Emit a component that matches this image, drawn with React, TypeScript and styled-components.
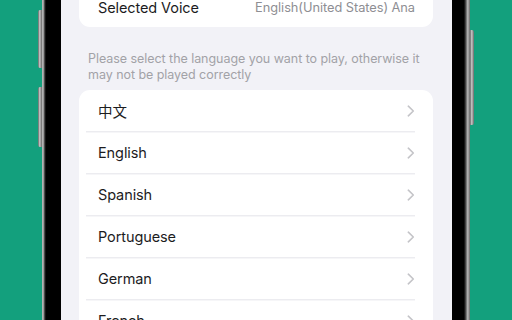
import React from "react";
import styled, { createGlobalStyle } from "styled-components";

const Global = createGlobalStyle`
  html, body { margin: 0; padding: 0; }
  body {
    width: 512px;
    height: 320px;
    overflow: hidden;
    background: #13a07d;
    font-family: Inter, "Noto Sans", "Noto Sans CJK SC", sans-serif;
    -webkit-font-smoothing: antialiased;
  }
`;

const Stage = styled.div`
  width: 512px;
  height: 320px;
  display: flex;
  align-items: stretch;
  padding-left: 42px;
  box-sizing: border-box;
  background: #13a07d;
  overflow: hidden;
`;

const Frame = styled.div`
  position: relative;
  width: 428px;
  display: flex;
  background: linear-gradient(
    90deg,
    #9c9c9c 0px,
    #c8c8c8 1px,
    #6a6a6a 2px,
    #2a2a2a 3px,
    #000 4px,
    #000 calc(100% - 6px),
    #2e2e2e calc(100% - 5px),
    #555 calc(100% - 4px),
    #9a9a9a calc(100% - 3px),
    #c0c0c0 calc(100% - 2px),
    #7a7a7a calc(100% - 1px)
  );
  padding: 0 18px 0 19px;
  box-sizing: border-box;
`;

const SideButton = styled.div<{ $side: "left" | "right"; $top: number; $h: number }>`
  position: absolute;
  top: ${(p) => p.$top}px;
  height: ${(p) => p.$h}px;
  width: 4px;
  ${(p) => (p.$side === "left" ? "left: -4px;" : "right: -4px;")}
  border-radius: ${(p) => (p.$side === "left" ? "2px 0 0 2px" : "0 2px 2px 0")};
  background: linear-gradient(
    90deg,
    #5a5a5a 0px,
    #a8a8a8 1px,
    #d0d0d0 2px,
    #7c7c7c 3px
  );
`;

const Screen = styled.div`
  flex: 1;
  background: #f2f2f7;
  padding: 0 19px 0 18px;
  display: flex;
  flex-direction: column;
  overflow: hidden;
`;

const Card = styled.div<{ $offset?: number }>`
  background: #ffffff;
  border-radius: 11px;
  margin-top: ${(p) => p.$offset ?? 0}px;
  flex-shrink: 0;
`;

const VoiceRow = styled.div`
  height: 40px;
  display: flex;
  align-items: center;
  justify-content: space-between;
  padding: 0 18px 0 19px;
`;

const Label = styled.span<{ $cjk?: boolean }>`
  font-size: 14.5px;
  color: #1c1c1e;
  letter-spacing: -0.1px;
  font-family: ${(p) =>
    p.$cjk
      ? '"Noto Sans CJK SC", sans-serif'
      : 'Inter, "Noto Sans", sans-serif'};
`;

const Value = styled.span`
  font-size: 12.8px;
  color: #8e8e93;
  letter-spacing: -0.05px;
`;

const Hint = styled.p`
  margin: 24px 0 8px;
  padding: 0 6px 0 9px;
  font-size: 12.5px;
  line-height: 15.5px;
  color: #a2a2a7;
  letter-spacing: -0.05px;
`;

const Row = styled.div`
  height: 41px;
  display: flex;
  align-items: center;
  justify-content: space-between;
  padding: 0 18px 0 19px;
`;

const Separator = styled.div`
  height: 1px;
  margin: 0 18px 0 7px;
  background: #ececf0;
  box-shadow: 0 1px 0 #f6f6f8;
`;

const Chevron = () => (
  <svg width="8" height="12" viewBox="0 0 8 12" fill="none">
    <path
      d="M1.3 1.2 L6.3 6 L1.3 10.8"
      stroke="#c4c4c8"
      strokeWidth="1.6"
      strokeLinecap="round"
      strokeLinejoin="round"
    />
  </svg>
);

const languages = ["中文", "English", "Spanish", "Portuguese", "German", "French"];

export default function App() {
  return (
    <>
      <Global />
      <Stage>
        <Frame>
          <SideButton $side="left" $top={10} $h={58} />
          <SideButton $side="left" $top={87} $h={60} />
          <SideButton $side="right" $top={30} $h={95} />
          <Screen>
            <Card $offset={-13}>
              <VoiceRow>
                <Label>Selected Voice</Label>
                <Value>English(United States) Ana</Value>
              </VoiceRow>
            </Card>
            <Hint>
              Please select the language you want to play, otherwise it may
              not be played correctly
            </Hint>
            <Card>
              {languages.map((lang, i) => (
                <React.Fragment key={lang}>
                  <Row>
                    <Label $cjk={lang === "中文"}>{lang}</Label>
                    <Chevron />
                  </Row>
                  {i < languages.length - 1 && <Separator />}
                </React.Fragment>
              ))}
            </Card>
          </Screen>
        </Frame>
      </Stage>
    </>
  );
}
